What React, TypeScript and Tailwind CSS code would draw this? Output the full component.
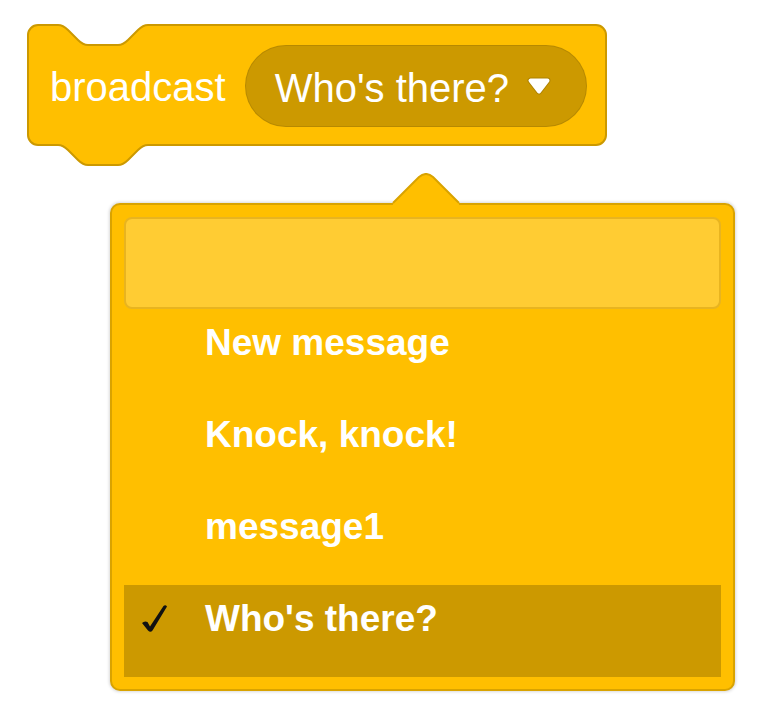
const items = ['New message', 'Knock, knock!', 'message1', "Who's there?"];
const selected = "Who's there?";

function BlockShape() {
  // scratch "stack" block outline, drawn in block units and scaled 2.5x
  const d =
    'M0 4 A4 4 0 0 1 4 0 H12 c2 0 3 1 4 2 l4 4 c1 1 2 2 4 2 h12 c2 0 3 -1 4 -2 l4 -4 c1 -1 2 -2 4 -2 ' +
    'H227.2 a4 4 0 0 1 4 4 V44 a4 4 0 0 1 -4 4 H48 c-2 0 -3 1 -4 2 l-4 4 c-1 1 -2 2 -4 2 h-12 ' +
    'c-2 0 -3 -1 -4 -2 l-4 -4 c-1 -1 -2 -2 -4 -2 H4 a4 4 0 0 1 -4 -4 Z';
  return (
    <svg className="absolute -left-[2px] -top-[2px] pointer-events-none" width={584} height={146}>
      <g transform="translate(2 2) scale(2.5)">
        <path d={d} fill="#FFBF00" stroke="#CC9900" strokeWidth={0.8} />
      </g>
    </svg>
  );
}

function DropArrow() {
  return (
    <svg width={24} height={18} viewBox="0 0 24 18">
      <path d="M3.5 3.5 H20.5 L12 14.5 Z" fill="#fff" stroke="rgba(0,0,0,0.15)" strokeWidth={6} strokeLinejoin="round" />
      <path d="M3.5 3.5 H20.5 L12 14.5 Z" fill="#fff" stroke="#fff" strokeWidth={4} strokeLinejoin="round" />
    </svg>
  );
}

function Check() {
  return (
    <svg width={28} height={30} viewBox="0 0 28 30" className="absolute left-[16px] top-[18px]">
      <path
        d="M2 20 Q4.5 17.5 7.5 19 L10 23.5 L23.5 3 Q25.5 1.5 27 3.5 L12.5 27.5 Q10.5 30 8 27.5 Z"
        fill="#111"
      />
    </svg>
  );
}

export default function App() {
  return (
    <div className="min-h-screen bg-white pt-[25px] pl-[28px]" style={{ fontFamily: '"Liberation Sans", Arial, sans-serif' }}>
      <div className="relative flex h-[120px] w-[578px] items-center pl-[22px]">
        <BlockShape />
        <span className="relative mt-[4px] text-[40px] leading-[40px] text-white">broadcast</span>
        <div className="relative ml-[19px] mt-[2px] flex h-[82px] w-[342px] items-center rounded-full border border-black/10 bg-[#CC9900] pl-[29px] pr-[35px]">
          <span className="mt-[4px] text-[40px] leading-[40px] text-white">Who's there?</span>
          <span className="ml-auto flex">
            <DropArrow />
          </span>
        </div>
      </div>

      <div className="ml-[82px] mt-[58px]">
        <div className="relative w-[625px] rounded-[10px] border-2 border-[#D9A300] bg-[#FFBF00] p-[12px] shadow-[0_0_3px_1px_rgba(0,0,0,0.15)]">
          <svg className="absolute left-[280px] -top-[32px]" width={68} height={34} viewBox="0 0 68 34">
            <path d="M1 30 L27 4 Q34 -2 41 4 L67 30 L67 34 L1 34 Z" fill="#FFBF00" />
            <path d="M1 30 L27 4 Q34 -2 41 4 L67 30" fill="none" stroke="#D9A300" strokeWidth={2} />
          </svg>
          <div className="h-[92px] rounded-[8px] border-2 border-[#E8B420] bg-[#FFCC33]" />
          <div className="flex flex-col">
            {items.map((it) => (
              <div
                key={it}
                className={`relative h-[92px] pl-[81px] pt-[14px] text-[37px] font-bold leading-[40px] text-white ${
                  it === selected ? 'bg-[#CC9900]' : ''
                }`}
              >
                {it === selected && <Check />}
                {it}
              </div>
            ))}
          </div>
        </div>
      </div>
    </div>
  );
}
